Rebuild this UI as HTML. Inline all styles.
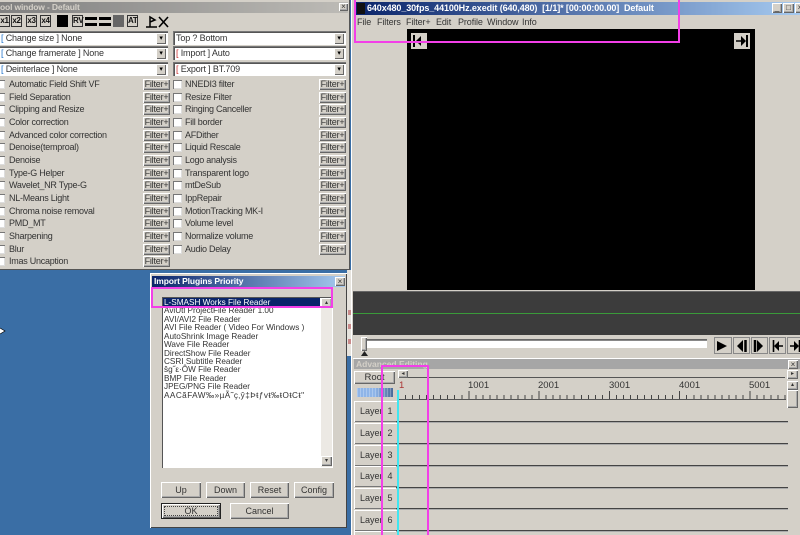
<!DOCTYPE html>
<html><head><meta charset="utf-8">
<style>
html,body{margin:0;padding:0;background:#3a6ea5}
#p{position:relative;width:800px;height:535px;overflow:hidden;background:#3a6ea5;font:9px "Liberation Sans",sans-serif;color:#333;filter:blur(.3px)}
#p div{position:absolute;white-space:nowrap;box-sizing:border-box}
.f{background:#d4d0c8}
.b{background:#d4d0c8;box-shadow:inset 1px 1px 0 #fff,inset -1px -1px 0 #666,inset -2px -2px 0 #aaa;text-align:center}
.fb{width:27px;height:11px;line-height:11px;font-size:9px;letter-spacing:-.2px}
.l{left:9px;height:11px;line-height:11px;letter-spacing:-.25px}
.rl{left:185px;height:11px;line-height:11px;letter-spacing:-.25px}
.c{width:9px;height:9px;background:#fff;box-shadow:inset 1px 1px 0 #777,inset -1px -1px 0 #ddd}
.cb{height:14px;background:#fff;box-shadow:inset 1px 1px 0 #777,inset 2px 2px 0 #555;line-height:15px;padding-left:4px;font-size:9px;letter-spacing:-.15px}
.cb i{position:absolute;right:2px;top:2px;width:10px;height:11px;background:#d4d0c8;box-shadow:inset 1px 1px 0 #fff,inset -1px -1px 0 #666;font:normal 7px/11px "Liberation Sans";text-align:center;color:#000}
.cb b{font-weight:normal;color:#27c}
.cb u{text-decoration:none;color:#c33}
.t{width:11px;height:12px;top:15px;background:#d4d0c8;border:1px solid #333;font:bold 8px/10px "Liberation Sans";text-align:center;color:#111;letter-spacing:-.3px}
.it{left:164px;height:9px;line-height:9px;font-size:8.2px;color:#333}
.lay{left:354px;width:43px;height:21px;line-height:21px;text-align:left;padding-left:6px;font-size:9px;white-space:pre!important;box-shadow:inset 1px 1px 0 #fff,inset 0 -1px 0 #777}
.sep{left:396px;width:392px;height:1px;background:#444;box-shadow:0 1px 0 #aaa}
.m{background:#f33fe8}
.mi{height:12px;line-height:12px;top:16px;letter-spacing:-.1px}
</style></head><body><div id="p">

<!-- tool window -->
<div class="f" style="left:0;top:0;width:350px;height:270px;box-shadow:inset -1px -1px 0 #555"></div>
<div style="left:0;top:2px;width:348px;height:11px;background:linear-gradient(90deg,#808080,#bdbbb6);color:#d4d0c8;font-weight:bold;font-size:8.500px;letter-spacing:-.15px;line-height:11px">ool window - Default</div>
<div class="b" style="left:339px;top:3px;width:9px;height:8px;font-size:8px;line-height:8px">×</div>

<div class="t" style="left:-1px">x1</div><div class="t" style="left:11px">x2</div><div class="t" style="left:26px">x3</div><div class="t" style="left:40px">x4</div>
<div style="left:57px;top:15px;width:11px;height:12px;background:#000"></div>
<div class="t" style="left:72px">RV</div>
<div style="left:85px;top:17px;width:12px;height:3px;background:#000"></div><div style="left:85px;top:23px;width:12px;height:3px;background:#000"></div>
<div style="left:99px;top:17px;width:12px;height:3px;background:#000"></div><div style="left:99px;top:23px;width:12px;height:3px;background:#000"></div>
<div style="left:113px;top:15px;width:11px;height:12px;background:#666"></div>
<div class="t" style="left:127px">AT</div>
<svg style="position:absolute;left:144px;top:15px" width="26" height="13"><path d="M2 12H13M6 12V2L11 5 6 7" fill="none" stroke="#000" stroke-width="1.500"/><path d="M15 2L24 12M24 2L15 12" stroke="#000" stroke-width="1.600"/></svg>

<div class="cb" style="left:-3px;top:31px;width:171px"><b>[</b> Change size ] None<i>▾</i></div>
<div class="cb" style="left:-3px;top:46px;width:171px"><b>[</b> Change framerate ] None<i>▾</i></div>
<div class="cb" style="left:-3px;top:62px;width:171px"><b>[</b> Deinterlace ] None<i>▾</i></div>
<div class="cb" style="left:173px;top:31px;width:173px;padding-left:3px">Top ? Bottom<i>▾</i></div>
<div class="cb" style="left:173px;top:46px;width:173px;padding-left:3px"><u>[</u> Import ] Auto<i>▾</i></div>
<div class="cb" style="left:173px;top:62px;width:173px;padding-left:3px"><u>[</u> Export ] BT.709<i>▾</i></div>

<div class="c" style="left:-4px;top:80px"></div><div class="l" style="top:79px">Automatic Field Shift VF</div><div class="b fb" style="left:143px;top:79px">Filter+</div>
<div class="c" style="left:-4px;top:93px"></div><div class="l" style="top:92px">Field Separation</div><div class="b fb" style="left:143px;top:92px">Filter+</div>
<div class="c" style="left:-4px;top:105px"></div><div class="l" style="top:104px">Clipping and Resize</div><div class="b fb" style="left:143px;top:104px">Filter+</div>
<div class="c" style="left:-4px;top:118px"></div><div class="l" style="top:117px">Color correction</div><div class="b fb" style="left:143px;top:117px">Filter+</div>
<div class="c" style="left:-4px;top:131px"></div><div class="l" style="top:130px">Advanced color correction</div><div class="b fb" style="left:143px;top:130px">Filter+</div>
<div class="c" style="left:-4px;top:143px"></div><div class="l" style="top:142px">Denoise(temproal)</div><div class="b fb" style="left:143px;top:142px">Filter+</div>
<div class="c" style="left:-4px;top:156px"></div><div class="l" style="top:155px">Denoise</div><div class="b fb" style="left:143px;top:155px">Filter+</div>
<div class="c" style="left:-4px;top:169px"></div><div class="l" style="top:168px">Type-G Helper</div><div class="b fb" style="left:143px;top:168px">Filter+</div>
<div class="c" style="left:-4px;top:181px"></div><div class="l" style="top:180px">Wavelet_NR Type-G</div><div class="b fb" style="left:143px;top:180px">Filter+</div>
<div class="c" style="left:-4px;top:194px"></div><div class="l" style="top:193px">NL-Means Light</div><div class="b fb" style="left:143px;top:193px">Filter+</div>
<div class="c" style="left:-4px;top:207px"></div><div class="l" style="top:206px">Chroma noise removal</div><div class="b fb" style="left:143px;top:206px">Filter+</div>
<div class="c" style="left:-4px;top:219px"></div><div class="l" style="top:218px">PMD_MT</div><div class="b fb" style="left:143px;top:218px">Filter+</div>
<div class="c" style="left:-4px;top:232px"></div><div class="l" style="top:231px">Sharpening</div><div class="b fb" style="left:143px;top:231px">Filter+</div>
<div class="c" style="left:-4px;top:245px"></div><div class="l" style="top:244px">Blur</div><div class="b fb" style="left:143px;top:244px">Filter+</div>
<div class="c" style="left:-4px;top:257px"></div><div class="l" style="top:256px">Imas Uncaption</div><div class="b fb" style="left:143px;top:256px">Filter+</div>

<div class="c" style="left:173px;top:80px"></div><div class="rl" style="top:79px">NNEDI3 filter</div><div class="b fb" style="left:319px;top:79px">Filter+</div>
<div class="c" style="left:173px;top:93px"></div><div class="rl" style="top:92px">Resize Filter</div><div class="b fb" style="left:319px;top:92px">Filter+</div>
<div class="c" style="left:173px;top:105px"></div><div class="rl" style="top:104px">Ringing Canceller</div><div class="b fb" style="left:319px;top:104px">Filter+</div>
<div class="c" style="left:173px;top:118px"></div><div class="rl" style="top:117px">Fill border</div><div class="b fb" style="left:319px;top:117px">Filter+</div>
<div class="c" style="left:173px;top:131px"></div><div class="rl" style="top:130px">AFDither</div><div class="b fb" style="left:319px;top:130px">Filter+</div>
<div class="c" style="left:173px;top:143px"></div><div class="rl" style="top:142px">Liquid Rescale</div><div class="b fb" style="left:319px;top:142px">Filter+</div>
<div class="c" style="left:173px;top:156px"></div><div class="rl" style="top:155px">Logo analysis</div><div class="b fb" style="left:319px;top:155px">Filter+</div>
<div class="c" style="left:173px;top:169px"></div><div class="rl" style="top:168px">Transparent logo</div><div class="b fb" style="left:319px;top:168px">Filter+</div>
<div class="c" style="left:173px;top:181px"></div><div class="rl" style="top:180px">mtDeSub</div><div class="b fb" style="left:319px;top:180px">Filter+</div>
<div class="c" style="left:173px;top:194px"></div><div class="rl" style="top:193px">IppRepair</div><div class="b fb" style="left:319px;top:193px">Filter+</div>
<div class="c" style="left:173px;top:207px"></div><div class="rl" style="top:206px">MotionTracking MK-I</div><div class="b fb" style="left:319px;top:206px">Filter+</div>
<div class="c" style="left:173px;top:219px"></div><div class="rl" style="top:218px">Volume level</div><div class="b fb" style="left:319px;top:218px">Filter+</div>
<div class="c" style="left:173px;top:232px"></div><div class="rl" style="top:231px">Normalize volume</div><div class="b fb" style="left:319px;top:231px">Filter+</div>
<div class="c" style="left:173px;top:245px"></div><div class="rl" style="top:244px">Audio Delay</div><div class="b fb" style="left:319px;top:244px">Filter+</div>

<!-- strip between windows -->
<div style="left:347px;top:270px;width:4px;height:86px;background:#e6e3dd"></div>
<div style="left:348px;top:310px;width:3px;height:5px;background:#c98a8a"></div>
<div style="left:348px;top:324px;width:3px;height:5px;background:#c98a8a"></div>
<div style="left:348px;top:339px;width:3px;height:5px;background:#c98a8a"></div>

<!-- main window -->
<div class="f" style="left:351px;top:0;width:449px;height:535px;box-shadow:inset 1px 0 0 #fff"></div>
<div style="left:355px;top:2px;width:445px;height:13px;background:linear-gradient(90deg,#0a246a,#a6caf0);color:#fff;font-weight:bold;font-size:9px;letter-spacing:-.1px;line-height:13px;padding-left:12px">640x480_30fps_44100Hz.exedit (640,480)&nbsp; [1/1]* [00:00:00.00]&nbsp; Default</div>
<div style="left:357px;top:3px;width:8px;height:11px;background:#111"></div>
<div class="b" style="left:772px;top:3px;width:10px;height:10px;font-size:8px;line-height:10px">_</div>
<div class="b" style="left:783px;top:3px;width:11px;height:10px;font-size:8px;line-height:10px">□</div>
<div class="b" style="left:795px;top:3px;width:10px;height:10px;font-size:8px;line-height:10px">×</div>
<div class="mi" style="left:357px">File</div>
<div class="mi" style="left:377px">Filters</div>
<div class="mi" style="left:406px">Filter+</div>
<div class="mi" style="left:436px">Edit</div>
<div class="mi" style="left:458px">Profile</div>
<div class="mi" style="left:487px">Window</div>
<div class="mi" style="left:522px">Info</div>

<div style="left:407px;top:29px;width:348px;height:261px;background:#000"></div>
<div class="f" style="left:411px;top:33px;width:16px;height:16px"></div>
<div class="f" style="left:734px;top:33px;width:16px;height:16px"></div>
<svg style="position:absolute;left:411px;top:33px" width="16" height="16"><path d="M3 2V14" stroke="#000" stroke-width="2"/><path d="M5 8L10 3V13Z" fill="#000"/></svg>
<svg style="position:absolute;left:734px;top:33px" width="16" height="16"><path d="M13 2V14" stroke="#000" stroke-width="2"/><path d="M2 8H9" stroke="#000" stroke-width="1.500"/><path d="M12 8L7 3V13Z" fill="#000"/></svg>

<!-- dark panel -->
<div style="left:353px;top:291px;width:447px;height:44px;background:#3c3c3c;border-top:1px solid #666"></div>
<div style="left:353px;top:313px;width:447px;height:1px;background:#3a9a3a"></div>

<!-- slider -->
<div style="left:366px;top:339px;width:341px;height:9px;background:#fff;box-shadow:inset 1px 1px 0 #666,inset 0 2px 0 #888"></div>
<div class="b" style="left:361px;top:337px;width:6px;height:14px"></div>
<svg style="position:absolute;left:361px;top:351px" width="7" height="5"><path d="M3.500 0L7 5H0Z" fill="#222"/></svg>
<svg style="position:absolute;left:712px;top:337px" width="88" height="18">
<g fill="#d4d0c8" stroke="#888"><rect x="2.500" y=".5" width="17" height="16"/><rect x="21.500" y=".5" width="16" height="16"/><rect x="39.500" y=".5" width="16" height="16"/><rect x="57.500" y=".5" width="16" height="16"/><rect x="75.500" y=".5" width="17" height="16"/></g>
<path d="M5 4L15 9 5 14Z M31 3L25 9 31 15Z M45 3L51 9 45 15Z" fill="#000"/>
<path d="M33.500 3V15M43 3V15" stroke="#000" stroke-width="2.500"/>
<path d="M61.500 3V15M63 9H71M78 9H86M87.500 3V15" stroke="#000" stroke-width="1.600"/>
<path d="M62 9L67 4V14Z M87 9L82 4V14Z" fill="#000"/>
</svg>

<!-- advanced editing -->
<div style="left:353px;top:358px;width:447px;height:177px;background:#d4d0c8;border-top:1px solid #fff"></div>
<div style="left:354px;top:359px;width:446px;height:10px;background:#a6a6a6;color:#d4d0c8;font-weight:bold;font-size:8.500px;line-height:10px;padding-left:2px">Advanced Editing</div>
<div class="b" style="left:788px;top:360px;width:10px;height:9px;font-size:8px;line-height:9px">×</div>
<div class="b" style="left:354px;top:371px;width:41px;height:13px;line-height:13px;font-size:9.500px">Root</div>
<div style="left:357px;top:388px;width:36px;height:9px;background:repeating-linear-gradient(90deg,rgba(255,255,255,.25) 0 1px,transparent 1px 3px),linear-gradient(90deg,#8fb5e8,#8fb5e8 50%,#4a6a9a)"></div>
<div style="left:398px;top:369px;width:387px;height:9px;background:#d4d0c8;border-bottom:1px solid #555"></div>
<div class="b" style="left:398px;top:370px;width:10px;height:8px;font-size:6px;line-height:8px">◂</div>
<div class="b" style="left:787px;top:370px;width:11px;height:9px;font-size:6px;line-height:9px">▸</div>
<div class="b" style="left:787px;top:381px;width:11px;height:9px;font-size:6px;line-height:9px">▴</div>
<div class="b" style="left:787px;top:390px;width:11px;height:18px"></div>
<div style="left:399px;top:381px;height:10px;line-height:10px;font-size:9.500px;color:#a33">1</div>
<div style="left:468px;top:381px;height:10px;line-height:10px;font-size:9.500px">1001</div>
<div style="left:538px;top:381px;height:10px;line-height:10px;font-size:9.500px">2001</div>
<div style="left:609px;top:381px;height:10px;line-height:10px;font-size:9.500px">3001</div>
<div style="left:679px;top:381px;height:10px;line-height:10px;font-size:9.500px">4001</div>
<div style="left:749px;top:381px;height:10px;line-height:10px;font-size:9.500px">5001</div>
<div style="left:398px;top:399px;width:388px;height:1px;background:#555"></div>
<div style="left:398px;top:395px;width:388px;height:4px;background:repeating-linear-gradient(90deg,#444 0 1px,transparent 1px 7.030px)"></div>
<div style="left:398px;top:391px;width:388px;height:8px;background:repeating-linear-gradient(90deg,#444 0 1px,transparent 1px 70.300px)"></div>

<div class="b lay" style="top:401px">Layer  1</div>
<div class="b lay" style="top:423px">Layer  2</div>
<div class="b lay" style="top:445px">Layer  3</div>
<div class="b lay" style="top:466px">Layer  4</div>
<div class="b lay" style="top:488px">Layer  5</div>
<div class="b lay" style="top:510px">Layer  6</div>
<div class="b lay" style="top:531px"></div>
<div class="sep" style="top:421px"></div>
<div class="sep" style="top:443px"></div>
<div class="sep" style="top:465px"></div>
<div class="sep" style="top:487px"></div>
<div class="sep" style="top:508px"></div>
<div class="sep" style="top:530px"></div>
<div style="left:397px;top:390px;width:2px;height:145px;background:#3fe6f0"></div>

<!-- magenta annotations -->
<div class="m" style="left:354px;top:0;width:2px;height:42px"></div>
<div class="m" style="left:678px;top:0;width:2px;height:42px"></div>
<div class="m" style="left:354px;top:41px;width:326px;height:2px"></div>
<div class="m" style="left:381px;top:365px;width:2px;height:170px"></div>
<div class="m" style="left:427px;top:365px;width:2px;height:170px"></div>
<div class="m" style="left:381px;top:365px;width:48px;height:2px"></div>

<!-- import dialog -->
<div class="f" style="left:150px;top:273px;width:197px;height:255px;box-shadow:inset 1px 1px 0 #fff,inset -1px -1px 0 #444"></div>
<div style="left:152px;top:276px;width:193px;height:11px;background:linear-gradient(90deg,#0a246a,#a6caf0);color:#fff;font-weight:bold;font-size:8.500px;letter-spacing:-.1px;line-height:11px;padding-left:2px">Import Plugins Priority</div>
<div class="b" style="left:335px;top:277px;width:10px;height:9px;font-size:8px;line-height:9px">×</div>
<div style="left:162px;top:297px;width:171px;height:171px;background:#fff;box-shadow:inset 1px 1px 0 #555"></div>
<div style="left:321px;top:298px;width:11px;height:169px;background:#ece9e4"></div>
<div class="b" style="left:321px;top:298px;width:11px;height:10px;font-size:6px;line-height:10px">▴</div>
<div class="b" style="left:321px;top:456px;width:11px;height:10px;font-size:6px;line-height:10px">▾</div>
<div class="it" style="top:306px">AviUtl ProjectFile Reader 1.00</div>
<div style="left:163px;top:298px;width:157px;height:8px;background:#0a246a"></div>
<div class="it" style="top:298px;color:#fff">L-SMASH Works File Reader</div>
<div class="it" style="top:315px">AVI/AVI2 File Reader</div>
<div class="it" style="top:323px">AVI File Reader ( Video For Windows )</div>
<div class="it" style="top:332px">AutoShrink Image Reader</div>
<div class="it" style="top:340px">Wave File Reader</div>
<div class="it" style="top:349px">DirectShow File Reader</div>
<div class="it" style="top:357px">CSRI Subtitle Reader</div>
<div class="it" style="top:365px">ŝg˝ε·ÔW File Reader</div>
<div class="it" style="top:374px">BMP File Reader</div>
<div class="it" style="top:382px">JPEG/PNG File Reader</div>
<div class="it" style="top:391px;letter-spacing:.45px">AACãFAW‰»µÃ˜ç‚ŷ‡Þŧƒvŧ‰ŧOŧCŧ"</div>
<div class="m" style="left:151px;top:287px;width:182px;height:2px"></div>
<div class="m" style="left:151px;top:306px;width:182px;height:2px"></div>
<div class="m" style="left:151px;top:287px;width:2px;height:21px"></div>
<div class="m" style="left:331px;top:287px;width:2px;height:21px"></div>
<div class="b" style="left:161px;top:482px;width:40px;height:16px;line-height:16px">Up</div>
<div class="b" style="left:206px;top:482px;width:39px;height:16px;line-height:16px">Down</div>
<div class="b" style="left:250px;top:482px;width:39px;height:16px;line-height:16px">Reset</div>
<div class="b" style="left:294px;top:482px;width:40px;height:16px;line-height:16px">Config</div>
<div class="b" style="left:161px;top:503px;width:60px;height:16px;line-height:14px;border:1px solid #222">OK</div>
<div style="left:164px;top:506px;width:54px;height:10px;border:1px dotted #444"></div>
<div class="b" style="left:230px;top:503px;width:59px;height:16px;line-height:16px">Cancel</div>

<!-- cursor mark -->
<svg style="position:absolute;left:0;top:326px" width="8" height="10"><path d="M0 2L5 5 0 8" fill="#fff" stroke="#000" stroke-width=".7"/></svg>
</div></body></html>
